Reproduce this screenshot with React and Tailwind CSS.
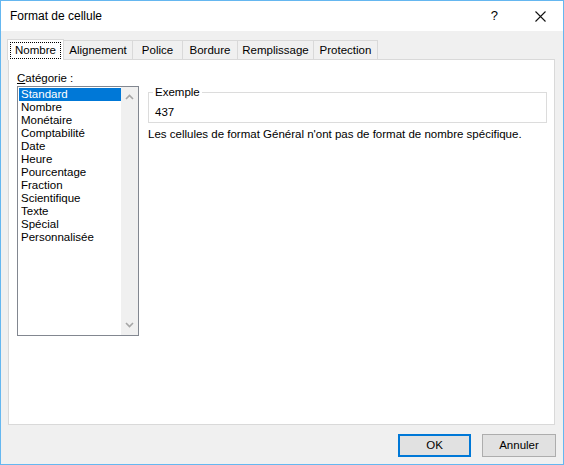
import React from 'react';

const font = { fontFamily: '"Liberation Sans", Arial, sans-serif' };

const tabs = [
  { label: 'Nombre', w: 'w-[57px]' },
  { label: 'Alignement', w: 'w-[70px]' },
  { label: 'Police', w: 'w-[51px]' },
  { label: 'Bordure', w: 'w-[56px]' },
  { label: 'Remplissage', w: 'w-[77px]' },
  { label: 'Protection', w: 'w-[65px]' },
];

const categories = [
  'Standard', 'Nombre', 'Monétaire', 'Comptabilité', 'Date', 'Heure',
  'Pourcentage', 'Fraction', 'Scientifique', 'Texte', 'Spécial', 'Personnalisée',
];

const Chevron = ({ up }) => (
  <svg width="9" height="6" viewBox="0 0 9 6" className="block">
    <path
      d={up ? 'M1 5 L4.5 1.5 L8 5' : 'M1 1 L4.5 4.5 L8 1'}
      fill="none"
      stroke="#a6a6a6"
      strokeWidth="1.6"
    />
  </svg>
);

export default function App() {
  return (
    <div
      className="w-[564px] h-[465px] border border-[#65b7f0] bg-[#f0f0f0] flex flex-col text-[11.5px] text-black overflow-hidden"
      style={font}
    >
      {/* Title bar */}
      <div className="h-[30px] bg-white flex items-center justify-between pl-[9px] pr-[17px]">
        <span className="text-[12px]">Format de cellule</span>
        <div className="flex items-center gap-[37px]">
          <span className="text-[13px]">?</span>
          <svg width="11" height="11" viewBox="0 0 11 11">
            <path d="M0.5 0.5 L10.5 10.5 M10.5 0.5 L0.5 10.5" stroke="#111" strokeWidth="1.1" />
          </svg>
        </div>
      </div>

      {/* Tabs */}
      <div className="flex items-end pl-[6px] pt-[7px] h-[28px]">
        {tabs.map((t, i) => {
          const active = i === 0;
          return (
            <div
              key={t.label}
              className={`${t.w} -ml-px first:ml-0 flex items-center justify-center border border-b-0 border-[#d9d9d9] ${
                active ? 'h-[21px] bg-white relative z-10 -mb-px' : 'h-[19px] bg-[#f0f0f0]'
              }`}
            >
              {active ? (
                <span className="border border-dotted border-black px-[4px] py-[1px] leading-[13px]">{t.label}</span>
              ) : (
                <span className="leading-[13px]">{t.label}</span>
              )}
            </div>
          );
        })}
      </div>

      {/* Panel */}
      <div className="ml-[7px] mr-[8px] h-[366px] border border-[#d9d9d9] bg-white flex pl-[8px] pr-[7px] pt-[11px]">
        <div className="flex flex-col">
          <div className="leading-[14px] mb-[1px]">
            <span className="underline">C</span>atégorie :
          </div>
          <div className="w-[122px] h-[250px] border border-[#828790] flex">
            <div className="flex-1 pt-[1px] pl-[1px]">
              {categories.map((c, i) => (
                <div
                  key={c}
                  className={`h-[13px] leading-[13px] pl-[2px] ${i === 0 ? 'bg-[#0078d7] text-white' : ''}`}
                >
                  {c}
                </div>
              ))}
            </div>
            <div className="w-[17px] bg-[#f0f0f0] flex flex-col items-center justify-between py-[7px]">
              <Chevron up />
              <Chevron />
            </div>
          </div>
        </div>

        <div className="flex-1 ml-[9px] mt-[14px]">
          <fieldset className="border border-[#dcdcdc] px-[4px] h-[38px]">
            <legend className="px-[2px] leading-[14px]">Exemple</legend>
            <div className="pl-[2px] pt-[6px] leading-[14px]">437</div>
          </fieldset>
          <div className="mt-[4px] leading-[14px]">
            Les cellules de format Général n'ont pas de format de nombre spécifique.
          </div>
        </div>
      </div>

      {/* Buttons */}
      <div className="flex justify-end gap-[11px] pr-[7px] pt-[9px]">
        <button className="w-[73px] h-[23px] bg-[#e1e1e1] border-2 border-[#0078d7] text-[11.5px]">OK</button>
        <button className="w-[74px] h-[23px] bg-[#e1e1e1] border border-[#adadad] text-[11.5px]">Annuler</button>
      </div>
    </div>
  );
}
